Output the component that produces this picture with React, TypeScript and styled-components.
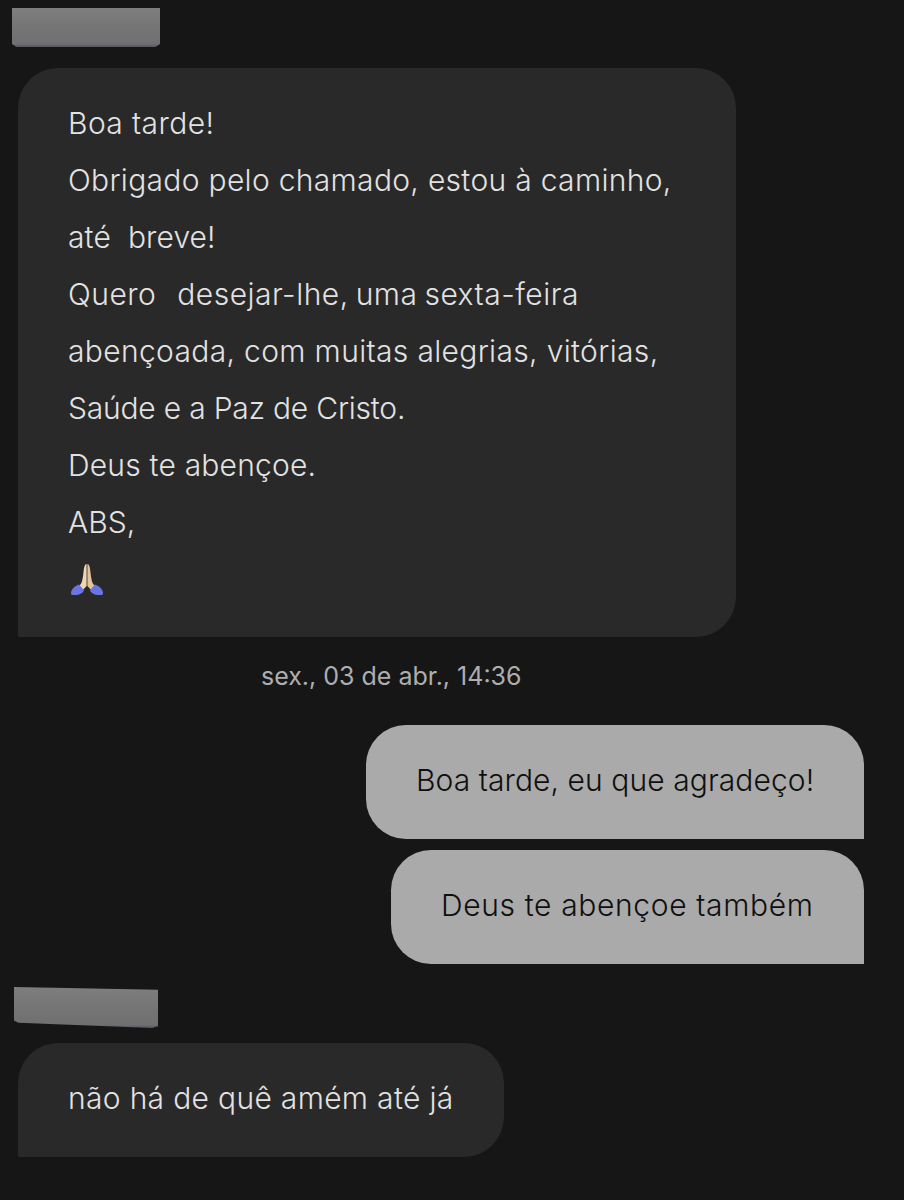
import styled, { createGlobalStyle } from 'styled-components'

const GlobalStyle = createGlobalStyle`
  html, body {
    margin: 0;
    background: #161616;
  }
`

const Page = styled.main`
  width: 904px;
  height: 1200px;
  box-sizing: border-box;
  padding-top: 8px;
  display: flex;
  flex-direction: column;
  font-family: Inter, 'Liberation Sans', sans-serif;
  font-size: 30px;
  font-weight: 300;
  overflow: hidden;
`

const Redacted = styled.div<{ $second?: boolean }>`
  box-sizing: border-box;
  width: ${(p) => (p.$second ? '144px' : '148px')};
  height: ${(p) => (p.$second ? '41px' : '39px')};
  margin-left: ${(p) => (p.$second ? '14px' : '12px')};
  margin-top: ${(p) => (p.$second ? '23px' : '0')};
  background: linear-gradient(180deg, #7e7e7e 0, #757575 50%, #707072 92%, #55555f 100%);
  clip-path: ${(p) =>
    p.$second
      ? 'polygon(0 0, 100% 7%, 100% 96%, 96% 100%, 3% 87%, 0 82%)'
      : 'polygon(0 0, 100% 0, 100% 92%, 97% 100%, 3% 100%, 0 92%)'};
`

const Bubble = styled.div<{ $mine?: boolean; $width: number; $tracking?: number }>`
  box-sizing: border-box;
  width: ${(p) => p.$width}px;
  padding: 27px 0 30px 50px;
  line-height: 57px;
  white-space: pre;
  letter-spacing: ${(p) => p.$tracking ?? 0}px;
  color: ${(p) => (p.$mine ? '#0f0f0f' : '#e2e2e2')};
  background: ${(p) => (p.$mine ? '#aaaaaa' : '#292929')};
  border-radius: ${(p) => (p.$mine ? '40px 40px 0 40px' : '40px 40px 40px 0')};
  margin-left: ${(p) => (p.$mine ? 'auto' : '18px')};
  margin-right: ${(p) => (p.$mine ? '40px' : '0')};
`

const FirstBubble = styled(Bubble)`
  margin-top: 21px;
  padding-bottom: 29px;
`

const LastBubble = styled(Bubble)`
  margin-top: 15px;
`

const MineBubble = styled(Bubble)`
  margin-top: 11px;
`

const Line = styled.div<{ $tracking: number; $wordGap?: number }>`
  letter-spacing: ${(p) => p.$tracking}px;
  word-spacing: ${(p) => p.$wordGap ?? 0}px;
`

const Stamp = styled.div`
  margin: 19px 0 29px 261px;
  height: 40px;
  line-height: 40px;
  font-size: 25px;
  font-weight: 400;
  letter-spacing: 0;
  color: #aeaeae;
`

const PrayIcon = styled.svg`
  display: block;
  width: 36px;
  height: 36px;
  margin: 10px 0 11px 1px;
`

function Pray() {
  return (
    <PrayIcon viewBox="0 0 36 36">
      <path d="M17.6 3 C15.4 3.4 15 7 14.4 12 C14 16 13.4 19.5 12.4 22 L9.6 26 L13.4 29.5 L17.6 25 Z" fill="#efd5b2" />
      <path d="M18.4 3 C20.6 3.4 21 7 21.6 12 C22 16 22.6 19.5 23.6 22 L26.4 26 L22.6 29.5 L18.4 25 Z" fill="#e3c39b" />
      <path d="M2 32 C2 28.5 5.5 25 10 23.5 C12 25.5 13.6 27.5 15 29.6 C13.6 32.6 10.5 34 7 34 L3.4 34 C2.4 34 2 33 2 32 Z" fill="#6a74e2" />
      <path d="M34 32 C34 28.5 30.5 25 26 23.5 C24 25.5 22.4 27.5 21 29.6 C22.4 32.6 25.5 34 29 34 L32.6 34 C33.6 34 34 33 34 32 Z" fill="#6a74e2" />
    </PrayIcon>
  )
}

const MESSAGE: { text: string; tracking: number; wordGap?: number }[] = [
  { text: 'Boa tarde!', tracking: 0.4 },
  { text: 'Obrigado pelo chamado, estou à caminho,', tracking: 0.31 },
  { text: 'até  breve!', tracking: 0.1 },
  { text: 'Quero   desejar-lhe, uma sexta-feira', tracking: 0.5, wordGap: -2 },
  { text: 'abençoada, com muitas alegrias, vitórias,', tracking: 0.34 },
  { text: 'Saúde e a Paz de Cristo.', tracking: -0.2 },
  { text: 'Deus te abençoe.', tracking: 0.2 },
  { text: 'ABS,', tracking: 0 },
]

export default function App() {
  return (
    <>
      <GlobalStyle />
      <Page>
        <Redacted />
        <FirstBubble $width={718}>
          {MESSAGE.map(({ text, tracking, wordGap }) => (
            <Line key={text} $tracking={tracking} $wordGap={wordGap}>{text}</Line>
          ))}
          <Pray />
        </FirstBubble>
        <Stamp>sex., 03 de abr., 14:36</Stamp>
        <Bubble $mine $width={498} $tracking={0.08}>Boa tarde, eu que agradeço!</Bubble>
        <MineBubble $mine $width={473} $tracking={0.64}>Deus te abençoe também</MineBubble>
        <Redacted $second />
        <LastBubble $width={486} $tracking={0.32}>não há de quê amém até já</LastBubble>
      </Page>
    </>
  )
}
